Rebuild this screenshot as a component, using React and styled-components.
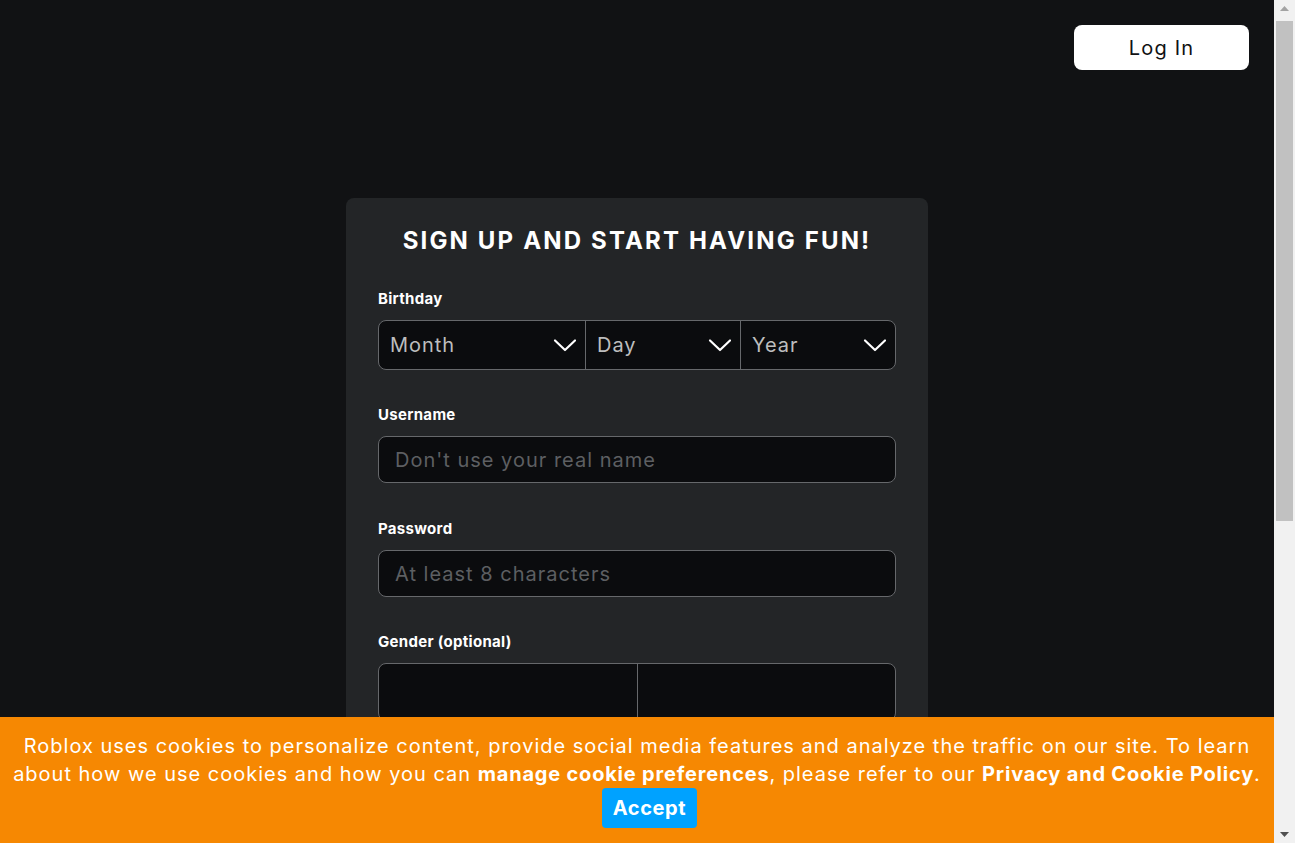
import React from "react";
import styled, { createGlobalStyle } from "styled-components";

const Global = createGlobalStyle`
  html, body { margin: 0; padding: 0; background: #111214; }
  body { font-family: Inter, "Noto Sans", Arial, sans-serif; color: #fff; }
  * { box-sizing: border-box; }
`;

const Page = styled.div`
  min-height: 1364px;
  margin-right: 21px;
  display: flex;
  flex-direction: column;
  background: #111214;
  letter-spacing: 0.06em;
`;

const Header = styled.header`
  display: flex;
  justify-content: flex-end;
  padding: 25px 25px 0 0;
`;

const LoginButton = styled.button`
  width: 175px;
  height: 45px;
  border: none;
  border-radius: 8px;
  background: #fff;
  color: #111214;
  font-family: inherit;
  font-size: 20px;
  font-weight: 400;
  letter-spacing: 0.06em;
  cursor: pointer;
`;

const Main = styled.main`
  display: flex;
  justify-content: center;
  padding-top: 128px;
`;

const Card = styled.section`
  width: 582px;
  background: #232527;
  border-radius: 8px;
  padding: 27px 32px 32px;
`;

const Title = styled.h1`
  margin: 0 0 33px;
  text-align: center;
  font-size: 24px;
  line-height: 32px;
  font-weight: 700;
  letter-spacing: 0.09em;
`;

const Field = styled.div`
  margin-bottom: ${(p) => p.gap || 37}px;
`;

const Label = styled.label`
  display: block;
  font-size: 15px;
  line-height: 18px;
  font-weight: 700;
  letter-spacing: 0.02em;
  margin-bottom: 12px;
`;

const Group = styled.div`
  display: grid;
  grid-template-columns: ${(p) => p.cols};
  height: ${(p) => p.h || 50}px;
  border: 1px solid #66686b;
  border-radius: 8px;
  background: #0b0c0e;
  overflow: hidden;
`;

const Select = styled.div`
  display: flex;
  align-items: center;
  justify-content: space-between;
  padding: 0 8px 0 11px;
  font-size: 20px;
  color: #bdbebe;
  & + & { border-left: 1px solid #66686b; }
`;

const Cell = styled.div`
  & + & { border-left: 1px solid #66686b; }
`;

const Input = styled.input`
  display: block;
  width: 100%;
  height: 47px;
  border: 1px solid #66686b;
  border-radius: 8px;
  background: #0b0c0e;
  padding: 0 16px;
  font-family: inherit;
  font-size: 20px;
  letter-spacing: 0.05em;
  color: #fff;
  outline: none;
  &::placeholder { color: #5d5f62; }
`;

const Chevron = () => (
  <svg width="24" height="24" viewBox="0 0 24 24" fill="none">
    <path d="M2 7.5 L12 17 L22 7.5" stroke="#fff" strokeWidth="2.2" strokeLinecap="round" strokeLinejoin="round" />
  </svg>
);

const Terms = styled.p`
  margin: 0 0 20px;
  font-size: 14px;
  color: #bdbebe;
  line-height: 20px;
`;

const SignUp = styled.button`
  width: 100%;
  height: 48px;
  border: none;
  border-radius: 8px;
  background: #335fff;
  color: #fff;
  font-family: inherit;
  font-size: 20px;
  font-weight: 600;
`;

const Banner = styled.div`
  position: fixed;
  left: 0;
  right: 21px;
  bottom: 0;
  background: #f68802;
  padding: 15px 0 15px;
  text-align: center;
  z-index: 10;
  letter-spacing: 0.062em;
`;

const BannerText = styled.p`
  margin: 0;
  font-size: 20px;
  line-height: 28px;
  color: #fff;
  white-space: nowrap;
  b { font-weight: 700; letter-spacing: 0.04em; }
`;

const Accept = styled.button`
  height: 40px;
  margin-left: 25px;
  padding: 0 11px;
  border: none;
  border-radius: 4px;
  background: #00a2ff;
  color: #fff;
  font-family: inherit;
  font-size: 20px;
  font-weight: 700;
  letter-spacing: 0.03em;
`;

/* Browser scrollbar rendered as an overlay at the window's right edge */
const ScrollBar = styled.div`
  position: fixed;
  top: 0;
  right: 0;
  bottom: 0;
  width: 21px;
  background: #f1f1f1;
  display: flex;
  flex-direction: column;
  z-index: 20;
`;

const ScrollArrow = styled.div`
  height: 17px;
  flex: none;
  display: flex;
  align-items: center;
  justify-content: center;
`;

const ScrollTrack = styled.div`
  flex: 1;
  padding: 4px 2px 0;
`;

const ScrollThumb = styled.div`
  height: 500px;
  background: #c1c1c1;
`;

const Tri = ({ up, color }) => (
  <svg width="9" height="5" viewBox="0 0 9 5">
    <path d={up ? "M0 5 L4.5 0 L9 5 Z" : "M0 0 L4.5 5 L9 0 Z"} fill={color} />
  </svg>
);

export default function App() {
  return (
    <>
      <Global />
      <Page>
        <Header>
          <LoginButton>Log In</LoginButton>
        </Header>
        <Main>
          <Card>
            <Title>SIGN UP AND START HAVING FUN!</Title>
            <Field gap={36}>
              <Label>Birthday</Label>
              <Group cols="206px 155px 1fr">
                <Select>Month<Chevron /></Select>
                <Select>Day<Chevron /></Select>
                <Select>Year<Chevron /></Select>
              </Group>
            </Field>
            <Field>
              <Label>Username</Label>
              <Input placeholder="Don't use your real name" />
            </Field>
            <Field gap={36}>
              <Label>Password</Label>
              <Input type="password" placeholder="At least 8 characters" />
            </Field>
            <Field>
              <Label>Gender (optional)</Label>
              <Group cols="1fr 1fr" h={58}>
                <Cell />
                <Cell />
              </Group>
            </Field>
            <Terms>
              By clicking Sign Up, you are agreeing to the Terms of Use and acknowledging the Privacy Policy.
            </Terms>
            <SignUp>Sign Up</SignUp>
          </Card>
        </Main>
      </Page>
      <Banner>
        <BannerText>
          Roblox uses cookies to personalize content, provide social media features and analyze the traffic on our site. To learn
          <br />
          about how we use cookies and how you can <b>manage cookie preferences</b>, please refer to our <b>Privacy and Cookie Policy</b>.
        </BannerText>
        <Accept>Accept</Accept>
      </Banner>
      <ScrollBar>
        <ScrollArrow><Tri up color="#a3a3a3" /></ScrollArrow>
        <ScrollTrack><ScrollThumb /></ScrollTrack>
        <ScrollArrow><Tri color="#505050" /></ScrollArrow>
      </ScrollBar>
    </>
  );
}
